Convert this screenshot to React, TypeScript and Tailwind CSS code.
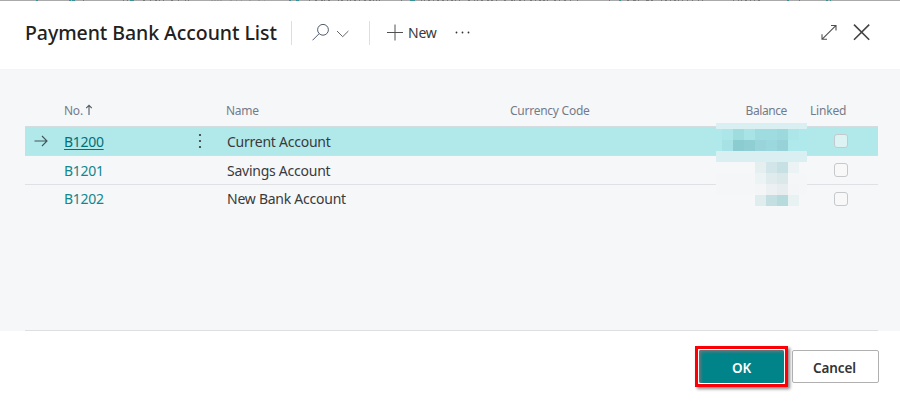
import React from "react";

const rows = [
  { no: "B1200", name: "Current Account", active: true },
  { no: "B1201", name: "Savings Account", active: false },
  { no: "B1202", name: "New Bank Account", active: false },
];

const redacted: string[][] = [
  ["#ace6e8", "#9fdcde", "#a8e3e6", "#9fdcdf", "#9fdcdf", "#9cd9dc", "#ace6e9", "#b0e9eb"],
  ["#a6e2e5", "#8bccd0", "#8fcfd4", "#98d4da", "#9ad8de", "#96d2d8", "#b0e9eb", "#b0e9eb"],
];
const redactedCols = [11, 11, 11, 11, 11, 11, 11, 8];

const teal = "#3b8f97";
const grey = "#777";
const fragments: [number, number, string][] = [
  [36, 2, teal], [69, 2, teal], [72, 3, teal], [83, 1, teal], [123, 1, teal], [127, 1, teal], [130, 4, teal],
  [143, 2, grey], [150, 1, grey], [155, 2, grey], [159, 1, grey], [163, 1, grey], [171, 2, grey], [178, 1, grey], [185, 1, grey], [188, 1, grey],
  [211, 2, "#999"], [214, 2, "#999"], [217, 2, "#999"], [220, 2, "#999"], [230, 2, "#999"], [236, 1, "#999"], [241, 1, "#999"], [249, 2, "#999"], [258, 2, "#999"], [264, 1, "#999"],
  [289, 2, teal], [296, 3, teal], [309, 1, grey], [315, 2, grey], [321, 2, grey], [324, 1, grey], [328, 2, grey], [338, 1, grey], [341, 2, grey], [347, 1, grey], [350, 1, grey], [354, 2, grey], [359, 1, grey], [364, 2, grey], [369, 2, grey], [373, 1, grey], [376, 1, grey], [379, 1, grey],
  [401, 1, teal], [410, 5, teal], [421, 1, grey], [424, 1, grey], [428, 2, grey], [433, 1, grey], [437, 2, grey], [442, 2, grey], [447, 1, grey], [451, 2, grey], [455, 1, grey], [459, 1, grey], [468, 2, grey], [474, 1, grey], [477, 1, grey], [481, 2, grey], [487, 2, grey], [491, 2, grey], [496, 1, grey], [504, 2, grey], [511, 2, grey], [514, 1, grey], [519, 2, grey], [524, 1, grey], [530, 2, grey], [535, 1, grey], [539, 2, grey], [543, 2, grey], [547, 1, grey], [554, 2, grey], [559, 1, grey], [564, 2, grey], [570, 1, grey], [577, 1, grey],
  [609, 1, teal], [619, 2, teal], [627, 2, grey], [633, 3, grey], [638, 1, grey], [646, 3, grey], [651, 2, grey], [661, 1, grey], [665, 2, grey], [670, 1, grey], [674, 2, grey], [678, 1, grey], [682, 1, grey], [687, 1, grey], [692, 1, grey], [698, 1, grey], [702, 1, grey],
  [733, 1, grey], [738, 1, grey], [741, 1, grey], [745, 2, grey], [750, 1, grey], [754, 1, grey], [758, 2, grey], [787, 2, teal], [799, 1, teal], [826, 2, teal], [830, 1, teal],
];

function Mosaic() {
  return (
    <div className="pointer-events-none absolute left-[716px] top-[123px] w-[91px]">
      <div className="h-[6px] bg-[#d9eff2]" />
      {redacted.map((line, i) => (
        <div key={i} className="flex h-[11px] bg-[#b0e9eb] pl-[6px]">
          {line.map((c, j) => (
            <span key={j} className="shrink-0" style={{ background: c, width: redactedCols[j] }} />
          ))}
        </div>
      ))}
      <div className="h-[11px] bg-[#d9eff2]" />
      {[
        ["#e5eff0", "#d2e6e9", "#c7e0e3", "#ebf3f4"],
        ["#ecf3f4", "#dfebed", "#dbe8ea", "#f5f6f8"],
        ["#f4f5f7", "#ecf0f2", "#e7edef", "#f4f5f7"],
        ["#e0edef", "#c3dfe1", "#b7dadd", "#e8f2f3"],
      ].map((line, i) => (
        <div key={i} className={"flex h-[11px] pl-[39px] " + (i === 0 || i === 3 ? "bg-[#f6f7f9]" : "bg-[#f5f6f8]")}>
          {line.map((c, j) => (
            <span key={j} className="w-[11px]" style={{ background: c }} />
          ))}
        </div>
      ))}
    </div>
  );
}

export default function App() {
  return (
    <div className="relative flex h-[406px] w-[900px] flex-col overflow-hidden bg-white font-['Noto_Sans',sans-serif] text-[#3a3a3a]">
      <div className="relative h-px shrink-0 bg-[#aaaaaa]">
        {fragments.map(([x, w, color]) => (
          <span key={x} className="absolute top-0 h-px" style={{ left: x, width: w, background: color }} />
        ))}
      </div>
      <header className="flex h-[68px] shrink-0 items-start pl-[25px]">
        <h1 className="mt-[18px] w-[266px] whitespace-nowrap text-[19.5px] font-medium leading-[28px] tracking-[-0.06px] text-[#212121]">
          Payment Bank Account List
        </h1>
        <div className="mt-5 h-6 w-px bg-[#dcdee0]" />
        <svg className="ml-[20px] mt-[22px]" width="18" height="18" viewBox="0 0 18 18" fill="none" stroke="#505c6d">
          <circle cx="11" cy="6.8" r="5.4" />
          <path d="M7.1 10.7 .5 17.3" />
        </svg>
        <svg className="ml-[6px] mt-[29px]" width="14" height="8" viewBox="0 0 14 8" fill="none" stroke="#666">
          <path d="m1 1 5.7 5.7L12.4 1" />
        </svg>
        <div className="ml-[19px] mt-5 h-6 w-px bg-[#dcdee0]" />
        <svg className="ml-[17px] mt-[23px]" width="17" height="17" viewBox="0 0 17 17" stroke="#505050">
          <path d="M0 8.5h16M8 .5v16" />
        </svg>
        <span className="ml-[4px] mt-[22px] w-[46px] text-[14px] leading-5 tracking-[-0.2px]">New</span>
        <svg className="mt-[30px]" width="18" height="4" viewBox="0 0 18 4" fill="#333">
          <circle cx="2.5" cy="1.5" r="0.9" /><circle cx="8.5" cy="1.5" r="0.9" /><circle cx="14.5" cy="1.5" r="0.9" />
        </svg>
        <svg className="ml-auto mt-[23px]" width="16" height="17" viewBox="0 0 16 17" fill="none" stroke="#505050" strokeWidth="1.1">
          <path d="M1.2 15.2 14.8 1.6M10 1.5h5v5M1 10.3v5h5" />
        </svg>
        <svg className="ml-[16px] mr-[29px] mt-[22px]" width="18" height="18" viewBox="0 0 18 18" stroke="#444" strokeWidth="1.6">
          <path d="m1 1.6 15.2 15.2m0-15.2L1 16.8" />
        </svg>
      </header>
      <main className="flex h-[262px] shrink-0 flex-col border-t border-[#f3f4f6] bg-[#f6f7f9] pl-[25px] pr-[22px]">
        <div className="flex h-[56px] shrink-0 pt-[32px] text-[12px] leading-[18px] tracking-[-0.25px] text-[#737b8a]">
          <span className="flex w-[201px] pl-[39px]">
            No.
            <svg className="ml-[2px] mt-[2px]" width="8" height="12" viewBox="0 0 8 12" fill="none" stroke="#555b68" strokeWidth="1.1">
              <path d="M4 11V1.5M1.2 4.2 4 1.3l2.8 2.9" />
            </svg>
          </span>
          <span className="w-[284px]">Name</span>
          <span className="w-[200px]">Currency Code</span>
          <span className="w-[77px] text-right tracking-[-0.4px]">Balance</span>
          <span className="ml-[23px] tracking-[-0.2px]">Linked</span>
        </div>
        {rows.map((r, i) => (
          <div
            key={r.no}
            className={
              "flex shrink-0 items-center text-[14px] leading-5 tracking-[-0.25px] " +
              (r.active ? "h-[30px] border-y border-[#d3dcde] bg-[#b1e9eb]" : i === 1 ? "h-[29px] border-b border-[#dfe1e4]" : "h-[28px]")
            }
          >
            <span className="w-[39px] pl-[9px]">
              {r.active && (
                <svg width="14" height="12" viewBox="0 0 14 12" fill="none" stroke="#3f5558" strokeWidth="1.1">
                  <path d="M.5 6h12.5M8 1l5 5-5 5" />
                </svg>
              )}
            </span>
            <span className={"w-[130px] " + (i < 2 ? "pt-[2px]" : "")}>
              <span className={"tracking-[-0.3px] " + (r.active ? "text-[#007079] underline underline-offset-[2px]" : "text-[#12868b]")}>{r.no}</span>
            </span>
            <span className="w-[33px] pl-[4px]">
              {r.active && (
                <svg width="4" height="16" viewBox="0 0 4 16" fill="#333">
                  <circle cx="2" cy="2" r="1.1" /><circle cx="2" cy="8" r="1.1" /><circle cx="2" cy="14" r="1.1" />
                </svg>
              )}
            </span>
            <span className={"w-[607px] " + (i < 2 ? "pt-[2px]" : "")}>{r.name}</span>
            <span className={"mb-px h-[14px] w-[14px] rounded-[3px] border border-[#c6c9cb] " + (r.active ? "bg-[#dcf3f4]" : "bg-[#f8f8f9]")} />
          </div>
        ))}
        <div className="mt-auto h-px shrink-0 bg-[#dedfe2]" />
      </main>
      <footer className="flex pl-[695px] pt-[15px] text-[14px] font-semibold">
        <button className="flex h-[41px] w-[93px] border-[3px] border-[#fb0007] bg-white p-px shadow-[2px_2px_3px_#888]">
          <span className="flex h-[33px] flex-1 items-center justify-center rounded-[2px] bg-[#008489] pt-[3px] text-[13.5px] tracking-[-0.2px] text-white shadow-[inset_2px_2px_3px_#65777a]">OK</span>
        </button>
        <button className="ml-[4px] mt-[4px] flex h-[33px] w-[87px] items-center justify-center rounded-[2px] border border-[#b0b0b0] bg-white pt-[3px] pr-[2px] text-[13.5px] tracking-[-0.1px] text-[#333]">
          Cancel
        </button>
      </footer>
      <Mosaic />
    </div>
  );
}
